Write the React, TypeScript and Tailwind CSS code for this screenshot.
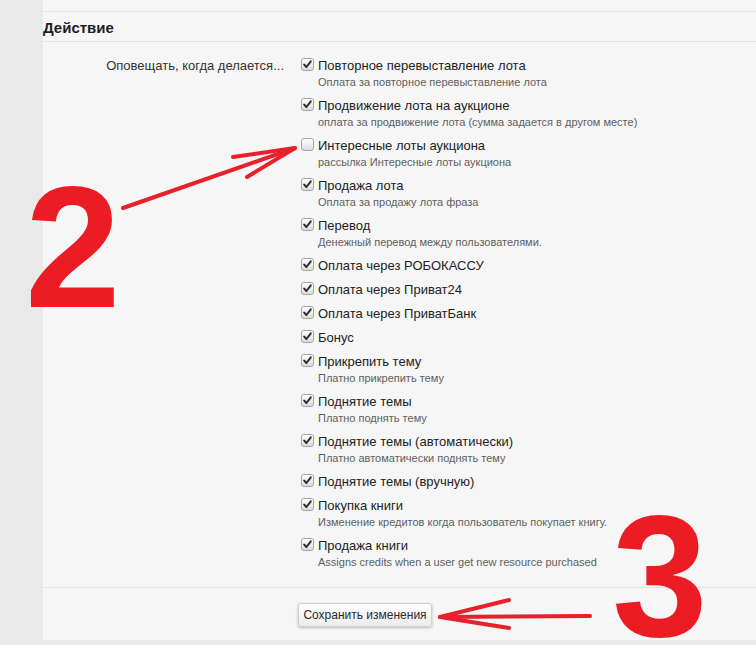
import React from 'react';

type Item = { title: string; hint?: string; checked: boolean };

const items: Item[] = [
  { title: 'Повторное перевыставление лота', hint: 'Оплата за повторное перевыставление лота', checked: true },
  { title: 'Продвижение лота на аукционе', hint: 'оплата за продвижение лота (сумма задается в другом месте)', checked: true },
  { title: 'Интересные лоты аукциона', hint: 'рассылка Интересные лоты аукциона', checked: false },
  { title: 'Продажа лота', hint: 'Оплата за продажу лота фраза', checked: true },
  { title: 'Перевод', hint: 'Денежный перевод между пользователями.', checked: true },
  { title: 'Оплата через РОБОКАССУ', checked: true },
  { title: 'Оплата через Приват24', checked: true },
  { title: 'Оплата через ПриватБанк', checked: true },
  { title: 'Бонус', checked: true },
  { title: 'Прикрепить тему', hint: 'Платно прикрепить тему', checked: true },
  { title: 'Поднятие темы', hint: 'Платно поднять тему', checked: true },
  { title: 'Поднятие темы (автоматически)', hint: 'Платно автоматически поднять тему', checked: true },
  { title: 'Поднятие темы (вручную)', checked: true },
  { title: 'Покупка книги', hint: 'Изменение кредитов когда пользователь покупает книгу.', checked: true },
  { title: 'Продажа книги', hint: 'Assigns credits when a user get new resource purchased', checked: true },
];

const CheckBox = ({ checked }: { checked: boolean }) => (
  <span className="mt-[1px] flex h-[13px] w-[13px] shrink-0 items-center justify-center rounded-[3px] border border-[#a6a6a6] bg-gradient-to-b from-[#ffffff] to-[#dcdcdc] shadow-[inset_0_1px_0_rgba(255,255,255,0.8)]">
    {checked && (
      <svg width="9" height="9" viewBox="0 0 9 9">
        <path d="M1.2 4.6 L3.4 7 L7.8 1.4" fill="none" stroke="#2e2e2e" strokeWidth="2" strokeLinecap="round" strokeLinejoin="round" />
      </svg>
    )}
  </span>
);

export default function App() {
  return (
    <div
      className="relative flex h-[645px] w-[756px] overflow-hidden bg-[#e9e9e9] text-[#222]"
      style={{ fontFamily: '"Liberation Sans", Arial, sans-serif' }}
    >
      <div className="w-[43px] shrink-0" />
      <div className="flex h-[640px] flex-1 flex-col bg-[#f6f6f6]">
        <div className="h-[12px] border-b border-[#e2e2e2]" />
        <div className="flex h-[30px] items-center border-b border-[#e2e2e2] pt-[3px] text-[15px] font-bold text-[#1e1e1e]">
          Действие
        </div>

        <div className="flex gap-[17px] pb-[17px] pt-[15px]">
          <div className="w-[241px] shrink-0 text-right text-[13px] leading-[17px] text-[#333]">
            Оповещать, когда делается...
          </div>
          <div className="flex flex-col gap-[7px]">
            {items.map((it) => (
              <div key={it.title} className="flex items-start gap-[4px]">
                <CheckBox checked={it.checked} />
                <div>
                  <div className="text-[13px] leading-[17px] text-[#222]">{it.title}</div>
                  {it.hint && <div className="text-[11px] leading-[16px] text-[#606060]">{it.hint}</div>}
                </div>
              </div>
            ))}
          </div>
        </div>

        <div className="border-t border-[#e2e2e2] pb-[13px] pl-[255px] pt-[14px]">
          <button className="h-[24px] w-[134px] rounded-[3px] border border-[#d0d0d0] bg-gradient-to-b from-[#ffffff] to-[#ececec] text-[12px] text-[#2a2a2a] shadow-[0_1px_3px_rgba(0,0,0,0.25)]">
            Сохранить изменения
          </button>
        </div>
      </div>

      {/* annotations */}
      <span className="pointer-events-none absolute left-[25px] top-[182px] text-[172px] font-bold leading-[130px] text-[#ec1c24]">
        2
      </span>
      <span className="pointer-events-none absolute left-[612px] top-[511px] text-[172px] font-bold leading-[130px] text-[#ec1c24]">
        3
      </span>
      <svg className="pointer-events-none absolute left-0 top-0" width="756" height="645" viewBox="0 0 756 645">
        <g fill="none" stroke="#e8202a" strokeWidth="4" strokeLinecap="round" strokeLinejoin="round">
          <path d="M123 208 L295 148" />
          <path d="M233 157 L295 148 L247 177" />
          <path d="M590 616 L440 617" />
          <path d="M509 600 L440 617 L509 628" />
        </g>
      </svg>
    </div>
  );
}
